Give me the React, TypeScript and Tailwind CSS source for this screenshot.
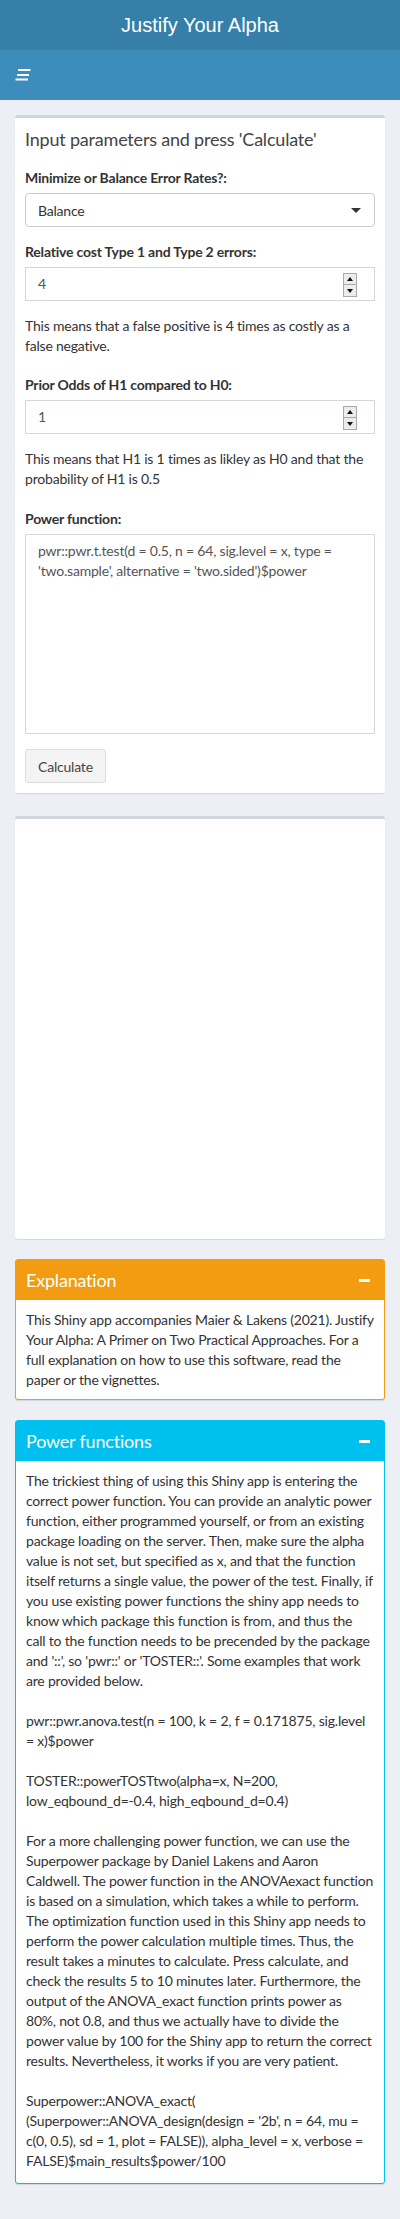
const font = { fontFamily: "Lato, 'Noto Sans', sans-serif", letterSpacing: '-0.2px' };

function Spinner() {
  return (
    <div className="absolute right-[17px] top-[5px] flex flex-col border border-[#a9a9a9] bg-[#ececec]">
      <div className="flex h-[11px] w-[12px] items-center justify-center border-b border-[#a9a9a9]">
        <div className="h-0 w-0 border-x-[3px] border-b-[4px] border-x-transparent border-b-[#111]" />
      </div>
      <div className="flex h-[11px] w-[12px] items-center justify-center">
        <div className="h-0 w-0 border-x-[3px] border-t-[4px] border-x-transparent border-t-[#111]" />
      </div>
    </div>
  );
}

function NumberInput({ value }: { value: string }) {
  return (
    <div className="relative h-[34px] border border-[#d2d6de] bg-white px-[12px] text-[14px] leading-[32px] text-[#555]">
      {value}
      <Spinner />
    </div>
  );
}

function Minus() {
  return <div className="h-[3px] w-[11px] bg-white" />;
}

export default function App() {
  return (
    <div className="min-h-[2219px] bg-[#ecf0f5] text-[14px] text-[#333]" style={font}>
      {/* header */}
      <div className="flex h-[50px] items-center justify-center bg-[#367fa9]">
        <span
          className="text-[20px] text-white"
          style={{ fontFamily: "'Liberation Sans', Arial, sans-serif", letterSpacing: '0px' }}
        >
          Justify Your Alpha
        </span>
      </div>
      <div className="flex h-[50px] items-center bg-[#3c8dbc] px-[15px]">
        <svg width="17" height="14" viewBox="0 0 17 14">
          <rect x="3" y="1" width="12.5" height="2" fill="#fff" />
          <rect x="2" y="6" width="12" height="2" fill="#fff" />
          <rect x="0.5" y="10.5" width="12.5" height="2" fill="#fff" />
        </svg>
      </div>

      <div className="px-[15px] pt-[15px]">
        {/* input box */}
        <div className="rounded-[3px] border-t-[3px] border-[#d2d6de] bg-white shadow-[0_1px_1px_rgba(0,0,0,0.1)]">
          <div className="px-[10px] pt-[11px] pb-[9px]">
            <h3 className="text-[18px] leading-[20px] text-[#444]">Input parameters and press 'Calculate'</h3>
          </div>
          <div className="px-[10px] pt-[10px] pb-[10px]">
            <label className="mb-[5px] block font-bold leading-[20px]">Minimize or Balance Error Rates?:</label>
            <div className="flex h-[34px] items-center justify-between rounded-[4px] border border-[#ccc] bg-white px-[12px] text-[14px]">
              <span>Balance</span>
              <div className="mr-[1px] h-0 w-0 border-x-[5px] border-t-[5px] border-x-transparent border-t-[#333]" />
            </div>

            <label className="mt-[15px] mb-[5px] block font-bold leading-[20px]">Relative cost Type 1 and Type 2 errors:</label>
            <NumberInput value="4" />
            <p className="mt-[15px] leading-[20px]">This means that a false positive is 4 times as costly as a false negative.</p>

            <label className="mt-[19px] mb-[5px] block font-bold leading-[20px]">Prior Odds of H1 compared to H0:</label>
            <NumberInput value="1" />
            <p className="mt-[15px] leading-[20px]">
              This means that H1 is 1 times as likley as H0 and that the probability of H1 is 0.5
            </p>

            <label className="mt-[20px] mb-[5px] block font-bold leading-[20px]">Power function:</label>
            <div className="h-[200px] border border-[#d2d6de] px-[12px] py-[6px] leading-[20px] text-[#555]">
              pwr::pwr.t.test(d = 0.5, n = 64, sig.level = x, type = 'two.sample', alternative = 'two.sided')$power
            </div>

            <button className="mt-[15px] h-[34px] rounded-[3px] border border-[#ddd] bg-[#f4f4f4] px-[12px] text-[14px] text-[#444]">
              Calculate
            </button>
          </div>
        </div>

        {/* empty output box */}
        <div className="mt-[23px] h-[423px] rounded-[3px] border-t-[3px] border-[#d2d6de] bg-white shadow-[0_1px_1px_rgba(0,0,0,0.1)]" />

        {/* explanation */}
        <div className="mt-[20px] rounded-[3px] border border-[#f39c12] bg-white shadow-[0_1px_1px_rgba(0,0,0,0.1)]">
          <div className="flex h-[40px] items-center justify-between bg-[#f39c12] pr-[14px] pl-[10px]">
            <span className="text-[18px] text-white">Explanation</span>
            <Minus />
          </div>
          <div className="px-[10px] pt-[10px] pb-[9px] leading-[20px]">
            This Shiny app accompanies Maier &amp; Lakens (2021). Justify Your Alpha: A Primer on Two Practical Approaches. For a full explanation on how to use this software, read the paper or the vignettes.
          </div>
        </div>

        {/* power functions */}
        <div className="mt-[20px] rounded-[3px] border border-[#00c0ef] bg-white shadow-[0_1px_1px_rgba(0,0,0,0.1)]">
          <div className="flex h-[40px] items-center justify-between bg-[#00c0ef] pr-[14px] pl-[10px]">
            <span className="text-[18px] text-white">Power functions</span>
            <Minus />
          </div>
          <div className="px-[10px] pt-[10px] pb-[12px] leading-[20px]">
            The trickiest thing of using this Shiny app is entering the correct power function. You can provide an analytic power function, either programmed yourself, or from an existing package loading on the server. Then, make sure the alpha value is not set, but specified as x, and that the function itself returns a single value, the power of the test. Finally, if you use existing power functions the shiny app needs to know which package this function is from, and thus the call to the function needs to be precended by the package and '::', so 'pwr::' or 'TOSTER::'. Some examples that work are provided below.
            <br />
            <br />
            pwr::pwr.anova.test(n = 100, k = 2, f = 0.171875, sig.level = x)$power
            <br />
            <br />
            TOSTER::powerTOSTtwo(alpha=x, N=200, low_eqbound_d=-0.4, high_eqbound_d=0.4)
            <br />
            <br />
            For a more challenging power function, we can use the Superpower package by Daniel Lakens and Aaron Caldwell. The power function in the ANOVAexact function is based on a simulation, which takes a while to perform. The optimization function used in this Shiny app needs to perform the power calculation multiple times. Thus, the result takes a minutes to calculate. Press calculate, and check the results 5 to 10 minutes later. Furthermore, the output of the ANOVA_exact function prints power as 80%, not 0.8, and thus we actually have to divide the power value by 100 for the Shiny app to return the correct results. Nevertheless, it works if you are very patient.
            <br />
            <br />
            Superpower::ANOVA_exact( (Superpower::ANOVA_design(design = '2b', n = 64, mu = c(0, 0.5), sd = 1, plot = FALSE)), alpha_level = x, verbose = FALSE)$main_results$power/100
          </div>
        </div>
      </div>
    </div>
  );
}
